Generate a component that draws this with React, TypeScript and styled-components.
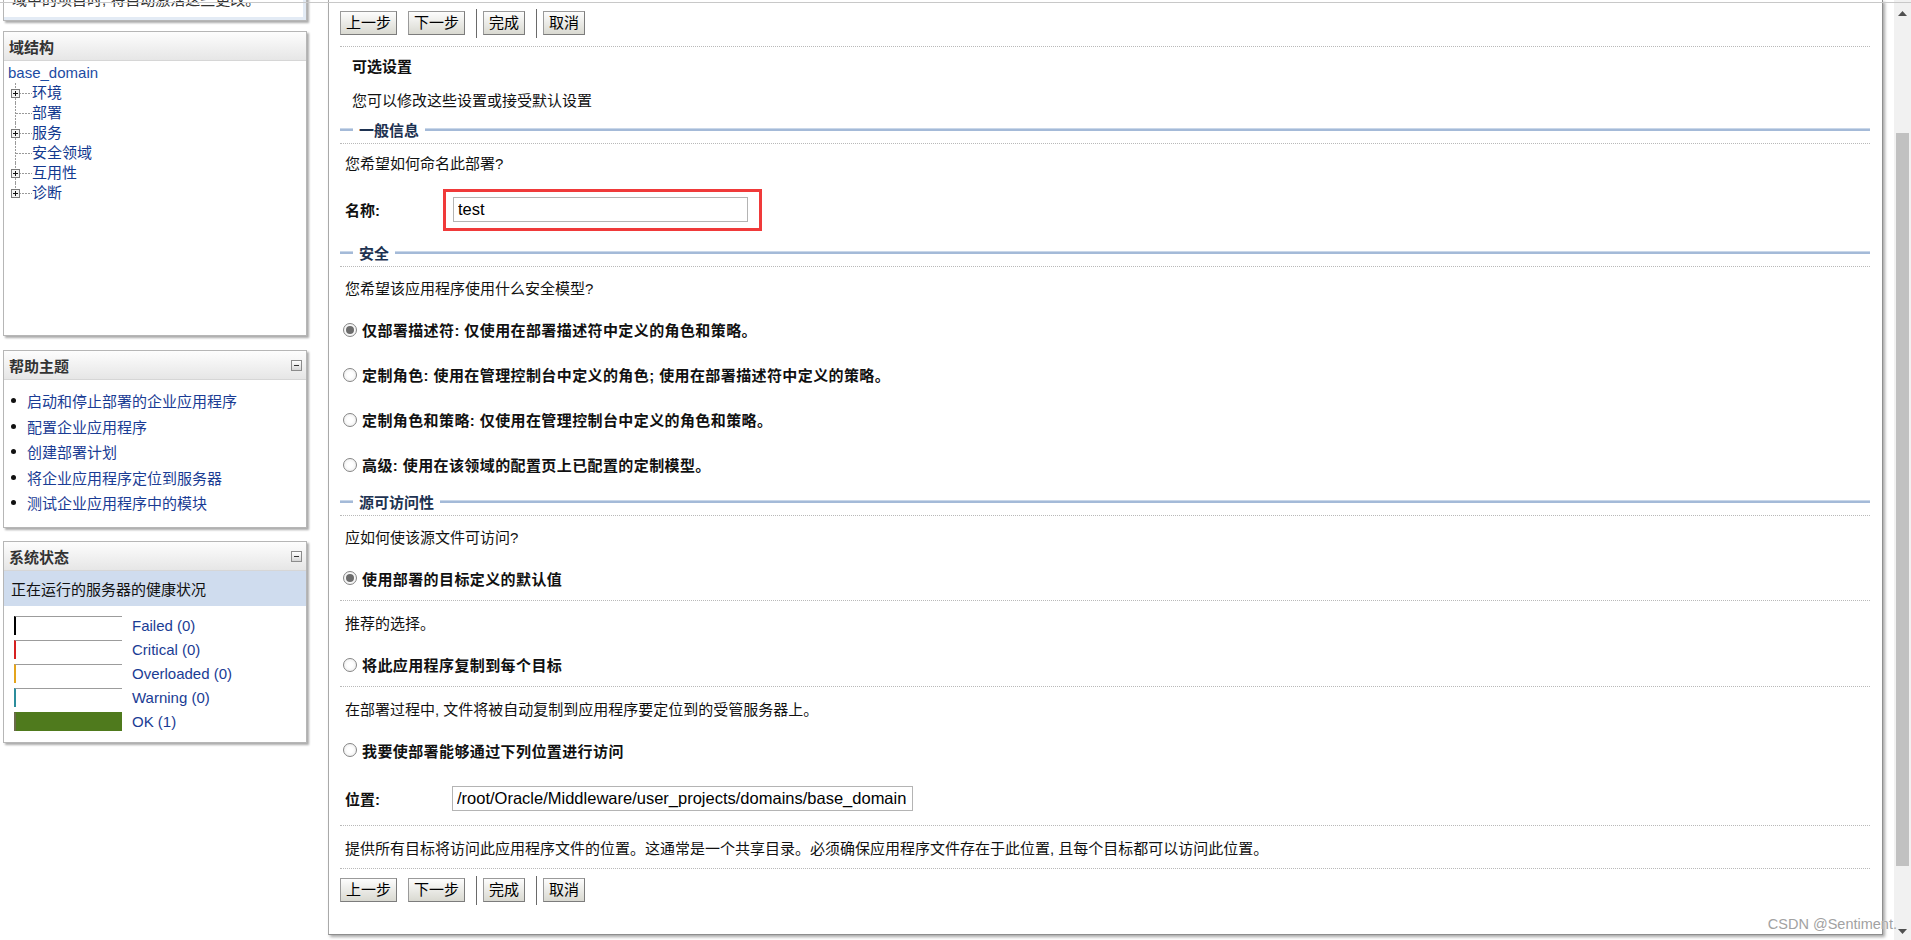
import React from 'react'
import styled, { createGlobalStyle, css } from 'styled-components'

const GlobalStyle = createGlobalStyle`
    html, body {
        margin: 0;
        padding: 0;
        background: #ffffff;
    }
    body {
        font-family: 'Liberation Sans', 'Noto Sans CJK SC', sans-serif;
        font-size: 15px;
        color: #000000;
        overflow: hidden;
    }
    * {
        box-sizing: border-box;
    }
`

const Page = styled.div`
    position: relative;
    display: flex;
    width: 1911px;
    height: 940px;
    overflow: hidden;
    background: #ffffff;
`

// screenshot edge line, drawn over everything
const TopEdge = styled.div`
    position: absolute;
    left: 0;
    right: 0;
    top: 2px;
    height: 1px;
    background: #c8c8c8;
`

/* ---------- sidebar ---------- */

const Sidebar = styled.aside`
    width: 328px;
    flex: none;
    display: flex;
    flex-direction: column;
    padding-left: 3px;
`

const Portlet = styled.section<{ $mt: number; $h: number }>`
    width: 304px;
    height: ${(p) => p.$h}px;
    margin-top: ${(p) => p.$mt}px;
    flex: none;
    border: 1px solid #b6b6b6;
    background: #ffffff;
    box-shadow: 2px 2px 2px rgba(0, 0, 0, 0.33);
    display: flex;
    flex-direction: column;
`

const PortletHeader = styled.div`
    height: 29px;
    flex: none;
    display: flex;
    align-items: center;
    justify-content: space-between;
    padding: 0 4px 0 5px;
    background: linear-gradient(#fdfdfd, #e6e6e6);
    border-bottom: 1px solid #d6d6d6;
`

const PortletTitle = styled.span`
    font-weight: bold;
    font-size: 15px;
    color: #333333;
`

const CollapseIcon = styled.span`
    width: 11px;
    height: 11px;
    border: 1px solid #8c8c8c;
    background: linear-gradient(#ffffff, #d6d6d6);
    display: flex;
    align-items: center;
    justify-content: center;
    &::after {
        content: '';
        width: 5px;
        height: 1px;
        background: #333333;
    }
`

const IntroText = styled.div`
    padding: 9px 0 0 8px;
    height: 100%;
    line-height: 20px;
    color: #333333;
    box-shadow: inset -3px -3px 0 #e3ebf5;
`

const TreeBody = styled.div`
    padding: 2px 0 0 4px;
`

const TreeRoot = styled.div`
    height: 20px;
    line-height: 20px;
    color: #1c4ba3;
`

const TreeRow = styled.div`
    height: 20px;
    display: flex;
    align-items: center;
    svg {
        flex: none;
        display: block;
    }
`

const TreeLink = styled.span`
    color: #12398f;
    line-height: 20px;
`

const HelpList = styled.ul`
    list-style: none;
    margin: 0;
    padding: 8px 0 0 7px;
`

const HelpItem = styled.li`
    height: 25.5px;
    display: flex;
    align-items: center;
    &::before {
        content: '';
        width: 5px;
        height: 5px;
        border-radius: 50%;
        background: #111111;
        margin-right: 11px;
    }
`

const HelpLink = styled.span`
    color: #1a3c94;
`

const StatusBand = styled.div`
    height: 35px;
    flex: none;
    display: flex;
    align-items: center;
    padding-left: 7px;
    background: #cfdcee;
    color: #111111;
`

const HealthList = styled.div`
    padding: 10px 0 0 10px;
    display: flex;
    flex-direction: column;
    gap: 5px;
`

const HealthRow = styled.div`
    height: 19px;
    display: flex;
    align-items: center;
`

const HealthBar = styled.span<{ $color: string; $filled?: boolean }>`
    width: 108px;
    height: 19px;
    flex: none;
    border-top: 1px solid #9c9c9c;
    border-left: 2px solid ${(p) => p.$color};
    ${(p) =>
        p.$filled &&
        css`
            background: #4f7a1d;
            border-top-color: #4f7a1d;
        `}
`

const HealthLabel = styled.span`
    margin-left: 10px;
    color: #1a3c94;
    line-height: 19px;
`

/* ---------- main wizard panel ---------- */

const Main = styled.main`
    width: 1555px;
    height: 935px;
    flex: none;
    border-left: 1px solid #a9a9a9;
    border-right: 1px solid #8e8e8e;
    border-bottom: 1px solid #8e8e8e;
    box-shadow: 2px 2px 3px rgba(0, 0, 0, 0.35);
    padding: 0 12px 0 11px;
    display: flex;
    flex-direction: column;
`

const ButtonBar = styled.div<{ $h: number }>`
    height: ${(p) => p.$h}px;
    flex: none;
    display: flex;
    align-items: center;
`

const WizardButton = styled.button`
    height: 24px;
    padding: 0 5px;
    margin: 0 11px 0 0;
    border: 1px solid #9a9a9a;
    border-right-color: #7c7c7c;
    border-bottom-color: #7c7c7c;
    border-radius: 0;
    background: linear-gradient(#fdfdfd, #d9d9d1);
    font-family: 'Liberation Sans', 'Noto Sans CJK SC', sans-serif;
    font-size: 15px;
    line-height: 22px;
    color: #000000;
`

const ButtonDivider = styled.span`
    width: 1px;
    height: 29px;
    background: #6a6a6a;
    margin-right: 6px;
`

const DottedRule = styled.div`
    height: 1px;
    flex: none;
    border-top: 1px dotted #b9b9b9;
`

const TextRow = styled.div<{ $h: number; $indent?: number; $bold?: boolean }>`
    height: ${(p) => p.$h}px;
    flex: none;
    display: flex;
    align-items: center;
    padding-left: ${(p) => p.$indent ?? 5}px;
    font-weight: ${(p) => (p.$bold ? 'bold' : 'normal')};
    color: #111111;
`

const SectionHeader = styled.div`
    height: 28px;
    flex: none;
    display: flex;
    align-items: center;
`

const SectionLine = styled.span<{ $w?: number }>`
    height: 3px;
    border-top: 1px solid #c9d7e9;
    background: #a4bad8;
    ${(p) =>
        p.$w
            ? css`
                  width: ${p.$w}px;
                  flex: none;
              `
            : css`
                  flex: 1;
              `}
`

const SectionLabel = styled.span`
    margin: 0 6px;
    font-weight: bold;
    color: #1d3251;
`

const RadioRow = styled.label<{ $h: number }>`
    height: ${(p) => p.$h}px;
    flex: none;
    display: flex;
    align-items: center;
    padding-left: 3px;
    font-weight: bold;
    letter-spacing: 0.4px;
    color: #111111;
`

const RadioMark = styled.span<{ $checked?: boolean }>`
    width: 14px;
    height: 14px;
    flex: none;
    margin-right: 5px;
    border-radius: 50%;
    border: 1px solid #858585;
    background: radial-gradient(circle, #ffffff 30%, #e8e8e8 100%);
    display: flex;
    align-items: center;
    justify-content: center;
    ${(p) =>
        p.$checked &&
        css`
            &::after {
                content: '';
                width: 8px;
                height: 8px;
                border-radius: 50%;
                background: #6c6c6c;
            }
        `}
`

const FieldRow = styled.div<{ $h: number }>`
    height: ${(p) => p.$h}px;
    flex: none;
    display: flex;
    align-items: center;
    padding-left: 5px;
`

const FieldLabel = styled.span<{ $w: number }>`
    width: ${(p) => p.$w}px;
    flex: none;
    font-weight: bold;
    color: #111111;
`

// red annotation frame drawn round the name field
const Highlight = styled.div`
    display: flex;
    padding: 5px 11px 6px 7px;
    border: 3px solid #f03a3a;
`

const TextInput = styled.input<{ $w: number }>`
    width: ${(p) => p.$w}px;
    height: 25px;
    margin: 0;
    padding: 0 3px 0 4px;
    border: 1px solid #b4b4b4;
    border-radius: 0;
    outline: none;
    background: #ffffff;
    font-family: 'Liberation Sans', Arial, sans-serif;
    font-size: 16.5px;
    color: #000000;
`

/* ---------- scrollbar + watermark ---------- */

const Scrollbar = styled.div`
    width: 17px;
    height: 940px;
    flex: none;
    margin-left: 11px;
    background: #f1f1f1;
    display: flex;
    flex-direction: column;
    align-items: center;
    svg {
        display: block;
        flex: none;
    }
`

const ScrollThumb = styled.div`
    width: 13px;
    height: 733px;
    margin-top: 116px;
    background: #c1c1c1;
`

const ScrollFill = styled.div`
    flex: 1;
`

const Watermark = styled.div`
    position: absolute;
    right: 14px;
    top: 914px;
    font-size: 14.5px;
    line-height: 20px;
    color: #a2a2a2;
    text-shadow: 0 0 1px #ffffff;
`

const TreeGlyph = ({ expander, last }: { expander?: boolean; last?: boolean }) => (
    <svg width="24" height="20" viewBox="0 0 24 20">
        <line x1="7.5" y1="0" x2="7.5" y2={last ? 10 : 20} stroke="#9a9a9a" strokeDasharray="2 1" />
        <line x1="8" y1="10.5" x2="24" y2="10.5" stroke="#9a9a9a" strokeDasharray="2 1" />
        {expander && (
            <>
                <rect x="3.5" y="6.5" width="8" height="8" fill="#f3f3f3" stroke="#7a7a7a" />
                <path d="M5 10.5h5M7.5 8v5" stroke="#111" />
            </>
        )}
    </svg>
)

const treeItems = [
    { label: '环境', expander: true },
    { label: '部署' },
    { label: '服务', expander: true },
    { label: '安全领域' },
    { label: '互用性', expander: true },
    { label: '诊断', expander: true },
]

const helpTopics = [
    '启动和停止部署的企业应用程序',
    '配置企业应用程序',
    '创建部署计划',
    '将企业应用程序定位到服务器',
    '测试企业应用程序中的模块',
]

const health = [
    { label: 'Failed (0)', color: '#000000' },
    { label: 'Critical (0)', color: '#d62020' },
    { label: 'Overloaded (0)', color: '#e4a41c' },
    { label: 'Warning (0)', color: '#2c8d9c' },
    { label: 'OK (1)', color: '#6b6b4a', filled: true },
]

const Buttons = ({ h }: { h: number }) => (
    <ButtonBar $h={h}>
        <WizardButton>上一步</WizardButton>
        <WizardButton>下一步</WizardButton>
        <ButtonDivider />
        <WizardButton>完成</WizardButton>
        <ButtonDivider />
        <WizardButton>取消</WizardButton>
    </ButtonBar>
)

const Section = ({ title }: { title: string }) => (
    <SectionHeader>
        <SectionLine $w={13} />
        <SectionLabel>{title}</SectionLabel>
        <SectionLine />
    </SectionHeader>
)

const Radio = ({ h, checked, children }: { h: number; checked?: boolean; children: React.ReactNode }) => (
    <RadioRow $h={h}>
        <RadioMark $checked={checked} />
        {children}
    </RadioRow>
)

export default function App() {
    return (
        <Page>
            <GlobalStyle />
            <Sidebar>
                <Portlet $mt={-20} $h={41}>
                    <IntroText>域中的项目时, 将自动激活这些更改。</IntroText>
                </Portlet>

                <Portlet $mt={10} $h={305}>
                    <PortletHeader>
                        <PortletTitle>域结构</PortletTitle>
                    </PortletHeader>
                    <TreeBody>
                        <TreeRoot>base_domain</TreeRoot>
                        {treeItems.map((t, i) => (
                            <TreeRow key={t.label}>
                                <TreeGlyph expander={t.expander} last={i === treeItems.length - 1} />
                                <TreeLink>{t.label}</TreeLink>
                            </TreeRow>
                        ))}
                    </TreeBody>
                </Portlet>

                <Portlet $mt={14} $h={178}>
                    <PortletHeader>
                        <PortletTitle>帮助主题</PortletTitle>
                        <CollapseIcon />
                    </PortletHeader>
                    <HelpList>
                        {helpTopics.map((t) => (
                            <HelpItem key={t}>
                                <HelpLink>{t}</HelpLink>
                            </HelpItem>
                        ))}
                    </HelpList>
                </Portlet>

                <Portlet $mt={13} $h={202}>
                    <PortletHeader>
                        <PortletTitle>系统状态</PortletTitle>
                        <CollapseIcon />
                    </PortletHeader>
                    <StatusBand>正在运行的服务器的健康状况</StatusBand>
                    <HealthList>
                        {health.map((h) => (
                            <HealthRow key={h.label}>
                                <HealthBar $color={h.color} $filled={h.filled} />
                                <HealthLabel>{h.label}</HealthLabel>
                            </HealthRow>
                        ))}
                    </HealthList>
                </Portlet>
            </Sidebar>

            <Main>
                <Buttons h={46} />
                <DottedRule />
                <TextRow $h={36} $indent={12} $bold>
                    可选设置
                </TextRow>
                <TextRow $h={32} $indent={12}>
                    您可以修改这些设置或接受默认设置
                </TextRow>

                <Section title="一般信息" />
                <DottedRule />
                <TextRow $h={37}>您希望如何命名此部署?</TextRow>
                <FieldRow $h={57}>
                    <FieldLabel $w={98}>名称:</FieldLabel>
                    <Highlight>
                        <TextInput $w={295} readOnly value="test" />
                    </Highlight>
                </FieldRow>

                <Section title="安全" />
                <DottedRule />
                <TextRow $h={40}>您希望该应用程序使用什么安全模型?</TextRow>
                <Radio h={45} checked>
                    仅部署描述符: 仅使用在部署描述符中定义的角色和策略。
                </Radio>
                <Radio h={45}>定制角色: 使用在管理控制台中定义的角色; 使用在部署描述符中定义的策略。</Radio>
                <Radio h={45}>定制角色和策略: 仅使用在管理控制台中定义的角色和策略。</Radio>
                <Radio h={45}>高级: 使用在该领域的配置页上已配置的定制模型。</Radio>

                <Section title="源可访问性" />
                <DottedRule />
                <TextRow $h={40}>应如何使该源文件可访问?</TextRow>
                <Radio h={44} checked>
                    使用部署的目标定义的默认值
                </Radio>
                <DottedRule />
                <TextRow $h={42}>推荐的选择。</TextRow>
                <Radio h={43}>将此应用程序复制到每个目标</Radio>
                <DottedRule />
                <TextRow $h={42}>在部署过程中, 文件将被自动复制到应用程序要定位到的受管服务器上。</TextRow>
                <Radio h={42}>我要使部署能够通过下列位置进行访问</Radio>
                <FieldRow $h={54}>
                    <FieldLabel $w={107}>位置:</FieldLabel>
                    <TextInput $w={461} readOnly value="/root/Oracle/Middleware/user_projects/domains/base_domain" />
                </FieldRow>
                <DottedRule />
                <TextRow $h={42}>
                    提供所有目标将访问此应用程序文件的位置。这通常是一个共享目录。必须确保应用程序文件存在于此位置, 且每个目标都可以访问此位置。
                </TextRow>
                <DottedRule />
                <Buttons h={42} />
            </Main>

            <Scrollbar>
                <svg width="17" height="17" viewBox="0 0 17 17">
                    <polygon points="4,16 13,16 8.5,11" fill="#505050" />
                </svg>
                <ScrollThumb />
                <ScrollFill />
                <svg width="17" height="17" viewBox="0 0 17 17">
                    <polygon points="4,6 13,6 8.5,11" fill="#505050" />
                </svg>
            </Scrollbar>

            <TopEdge />
            <Watermark>CSDN @Sentiment.</Watermark>
        </Page>
    )
}
